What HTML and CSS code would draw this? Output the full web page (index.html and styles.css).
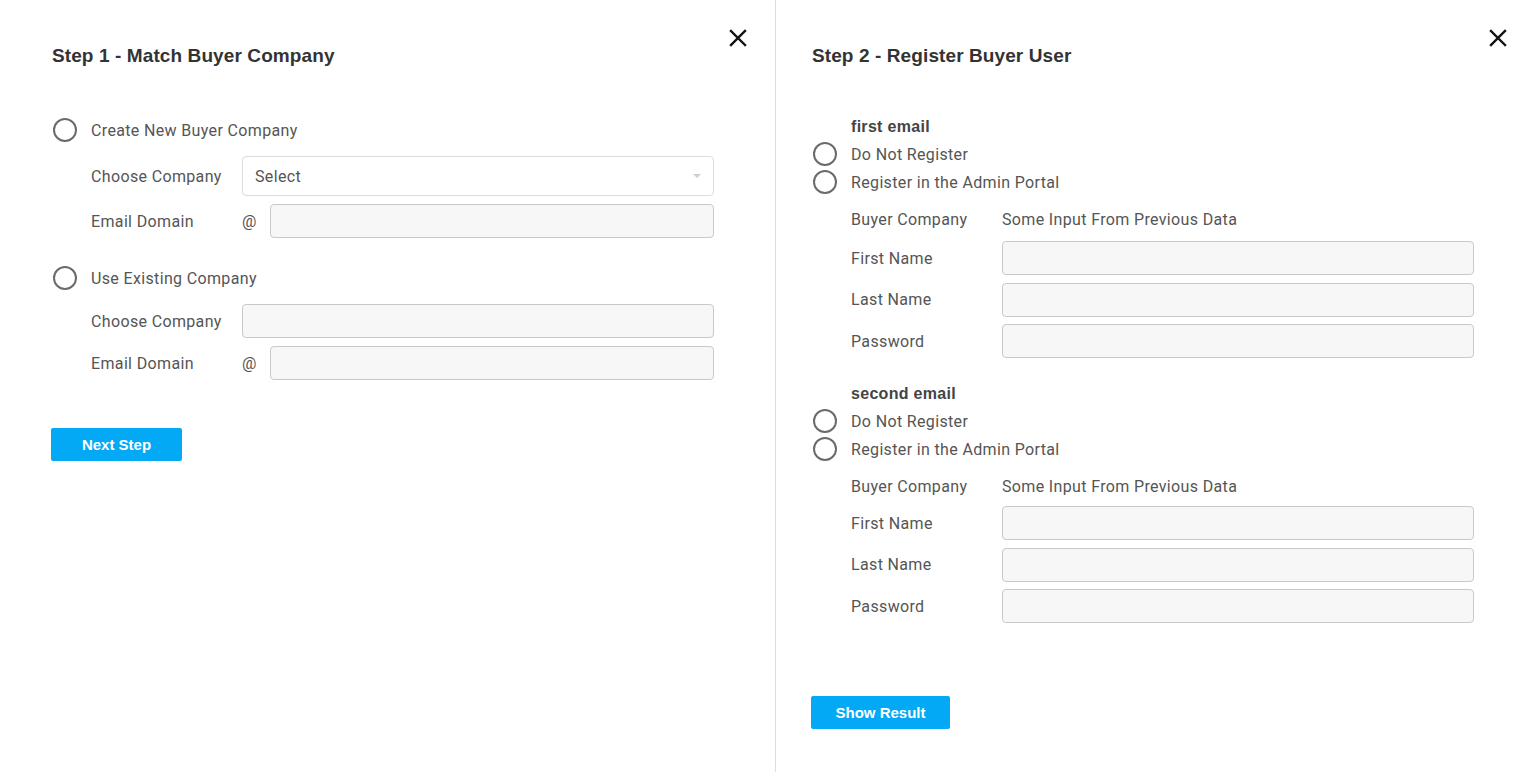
FILE: index.html
```html
<!DOCTYPE html>
<html lang="en">
<head>
<meta charset="utf-8">
<title>Buyer Registration</title>
<link rel="stylesheet" href="styles.css">
</head>
<body>
<main class="page">
  <section class="panel panel-left">
    <h2 class="title">Step 1 - Match Buyer Company</h2>
    <button class="close" aria-label="Close">
      <svg width="18" height="18" viewBox="0 0 18 18"><path d="M2 2L16 16M16 2L2 16" stroke="#111" stroke-width="2.4" stroke-linecap="square" fill="none"/></svg>
    </button>

    <div class="option option-first">
      <span class="radio"></span><span class="option-label">Create New Buyer Company</span>
    </div>
    <div class="row row-select">
      <span class="row-label">Choose Company</span>
      <div class="select"><span>Select</span><span class="caret"></span></div>
    </div>
    <div class="row row-gap">
      <span class="row-label">Email Domain</span>
      <span class="at">@</span>
      <div class="input input-domain"></div>
    </div>

    <div class="option option-second">
      <span class="radio"></span><span class="option-label">Use Existing Company</span>
    </div>
    <div class="row row-after-option">
      <span class="row-label">Choose Company</span>
      <div class="input"></div>
    </div>
    <div class="row row-gap">
      <span class="row-label">Email Domain</span>
      <span class="at">@</span>
      <div class="input input-domain"></div>
    </div>

    <button class="btn btn-next">Next Step</button>
  </section>

  <section class="panel panel-right">
    <h2 class="title">Step 2 - Register Buyer User</h2>
    <button class="close" aria-label="Close">
      <svg width="18" height="18" viewBox="0 0 18 18"><path d="M2 2L16 16M16 2L2 16" stroke="#111" stroke-width="2.4" stroke-linecap="square" fill="none"/></svg>
    </button>

    <div class="group group-first">
      <div class="group-title">first email</div>
      <div class="choice"><span class="radio"></span><span class="option-label">Do Not Register</span></div>
      <div class="choice"><span class="radio"></span><span class="option-label">Register in the Admin Portal</span></div>
      <div class="info"><span class="row-label">Buyer Company</span><span class="info-value">Some Input From Previous Data</span></div>
      <div class="fields">
        <div class="row"><span class="row-label">First Name</span><div class="input"></div></div>
        <div class="row"><span class="row-label">Last Name</span><div class="input"></div></div>
        <div class="row"><span class="row-label">Password</span><div class="input"></div></div>
      </div>
    </div>

    <div class="group group-second">
      <div class="group-title">second email</div>
      <div class="choice"><span class="radio"></span><span class="option-label">Do Not Register</span></div>
      <div class="choice"><span class="radio"></span><span class="option-label">Register in the Admin Portal</span></div>
      <div class="info"><span class="row-label">Buyer Company</span><span class="info-value">Some Input From Previous Data</span></div>
      <div class="fields">
        <div class="row"><span class="row-label">First Name</span><div class="input"></div></div>
        <div class="row"><span class="row-label">Last Name</span><div class="input"></div></div>
        <div class="row"><span class="row-label">Password</span><div class="input"></div></div>
      </div>
    </div>

    <button class="btn btn-result">Show Result</button>
  </section>
</main>
</body>
</html>
```
FILE: styles.css
```css
* { box-sizing: border-box; }

html, body {
  margin: 0;
  padding: 0;
  background: #fff;
}

body {
  font-family: Roboto, "Liberation Sans", Arial, sans-serif;
  color: #555;
  font-size: 16px;
  letter-spacing: 0.35px;
}

.page {
  display: flex;
  height: 772px;
  overflow: hidden;
}

.panel {
  position: relative;
  display: flex;
  flex-direction: column;
  align-items: flex-start;
  padding-top: 44px;
}

.panel-left {
  width: 776px;
  padding-left: 52px;
  border-right: 1px solid #dedede;
}

.panel-right {
  flex: 1;
  padding-left: 36px;
}

.title {
  margin: 0;
  font-family: "Liberation Sans", Arial, sans-serif;
  font-weight: bold;
  font-size: 19px;
  line-height: 24px;
  letter-spacing: 0.1px;
  color: #333;
}

.close {
  position: absolute;
  top: 29px;
  right: 28px;
  width: 18px;
  height: 18px;
  padding: 0;
  border: 0;
  background: none;
  display: flex;
}

.panel-right .close {
  right: 30px;
}

.radio {
  width: 24px;
  height: 24px;
  border: 2px solid #6b6b6b;
  border-radius: 50%;
  flex: none;
}

.option, .choice {
  display: flex;
  align-items: center;
  gap: 14px;
  height: 24px;
  margin-left: 1px;
}

.option-first { margin-top: 50px; }
.option-second { margin-top: 28px; }

.row {
  display: flex;
  align-items: center;
  padding-left: 39px;
  width: 100%;
}

.row-label {
  width: 151px;
  flex: none;
}

.row-select { margin-top: 14px; }
.row-after-option { margin-top: 14px; }
.row-gap { margin-top: 8px; }

.select {
  width: 472px;
  height: 40px;
  border: 1px solid #dcdcdc;
  border-radius: 4px;
  background: #fff;
  display: flex;
  align-items: center;
  justify-content: space-between;
  padding: 0 12px;
  color: #555;
}

.caret {
  width: 0;
  height: 0;
  border-left: 4px solid transparent;
  border-right: 4px solid transparent;
  border-top: 4px solid #cfcfcf;
}

.input {
  width: 472px;
  height: 34px;
  border: 1px solid #c9c9c9;
  border-radius: 4px;
  background: #f7f7f7;
}

.at {
  width: 28px;
  flex: none;
}

.input-domain {
  width: 444px;
}

.btn {
  border: 0;
  border-radius: 2px;
  background: #03a9f4;
  color: #fff;
  font-family: "Liberation Sans", Arial, sans-serif;
  font-weight: bold;
  font-size: 15px;
  letter-spacing: 0;
  height: 33px;
  padding: 0;
  cursor: pointer;
}

.btn-next {
  margin-top: 48px;
  margin-left: -1px;
  width: 131px;
}

.btn-result {
  margin-top: 73px;
  margin-left: -1px;
  width: 139px;
}

/* right panel groups */
.group {
  display: flex;
  flex-direction: column;
  align-items: flex-start;
  width: 100%;
}

.group-first { margin-top: 49px; }
.group-second { margin-top: 26px; }

.group-title {
  font-family: "Liberation Sans", Arial, sans-serif;
  font-weight: bold;
  font-size: 16px;
  line-height: 20px;
  letter-spacing: 0.3px;
  color: #444;
  margin-left: 39px;
  margin-bottom: 3px;
}

.choice {
  height: 28px;
}

.info {
  display: flex;
  align-items: center;
  height: 20px;
  margin-top: 13px;
  padding-left: 39px;
}

.fields {
  display: flex;
  flex-direction: column;
  gap: 7.5px;
  margin-top: 12px;
  width: 100%;
}

.group-second .fields { margin-top: 10px; }
```
